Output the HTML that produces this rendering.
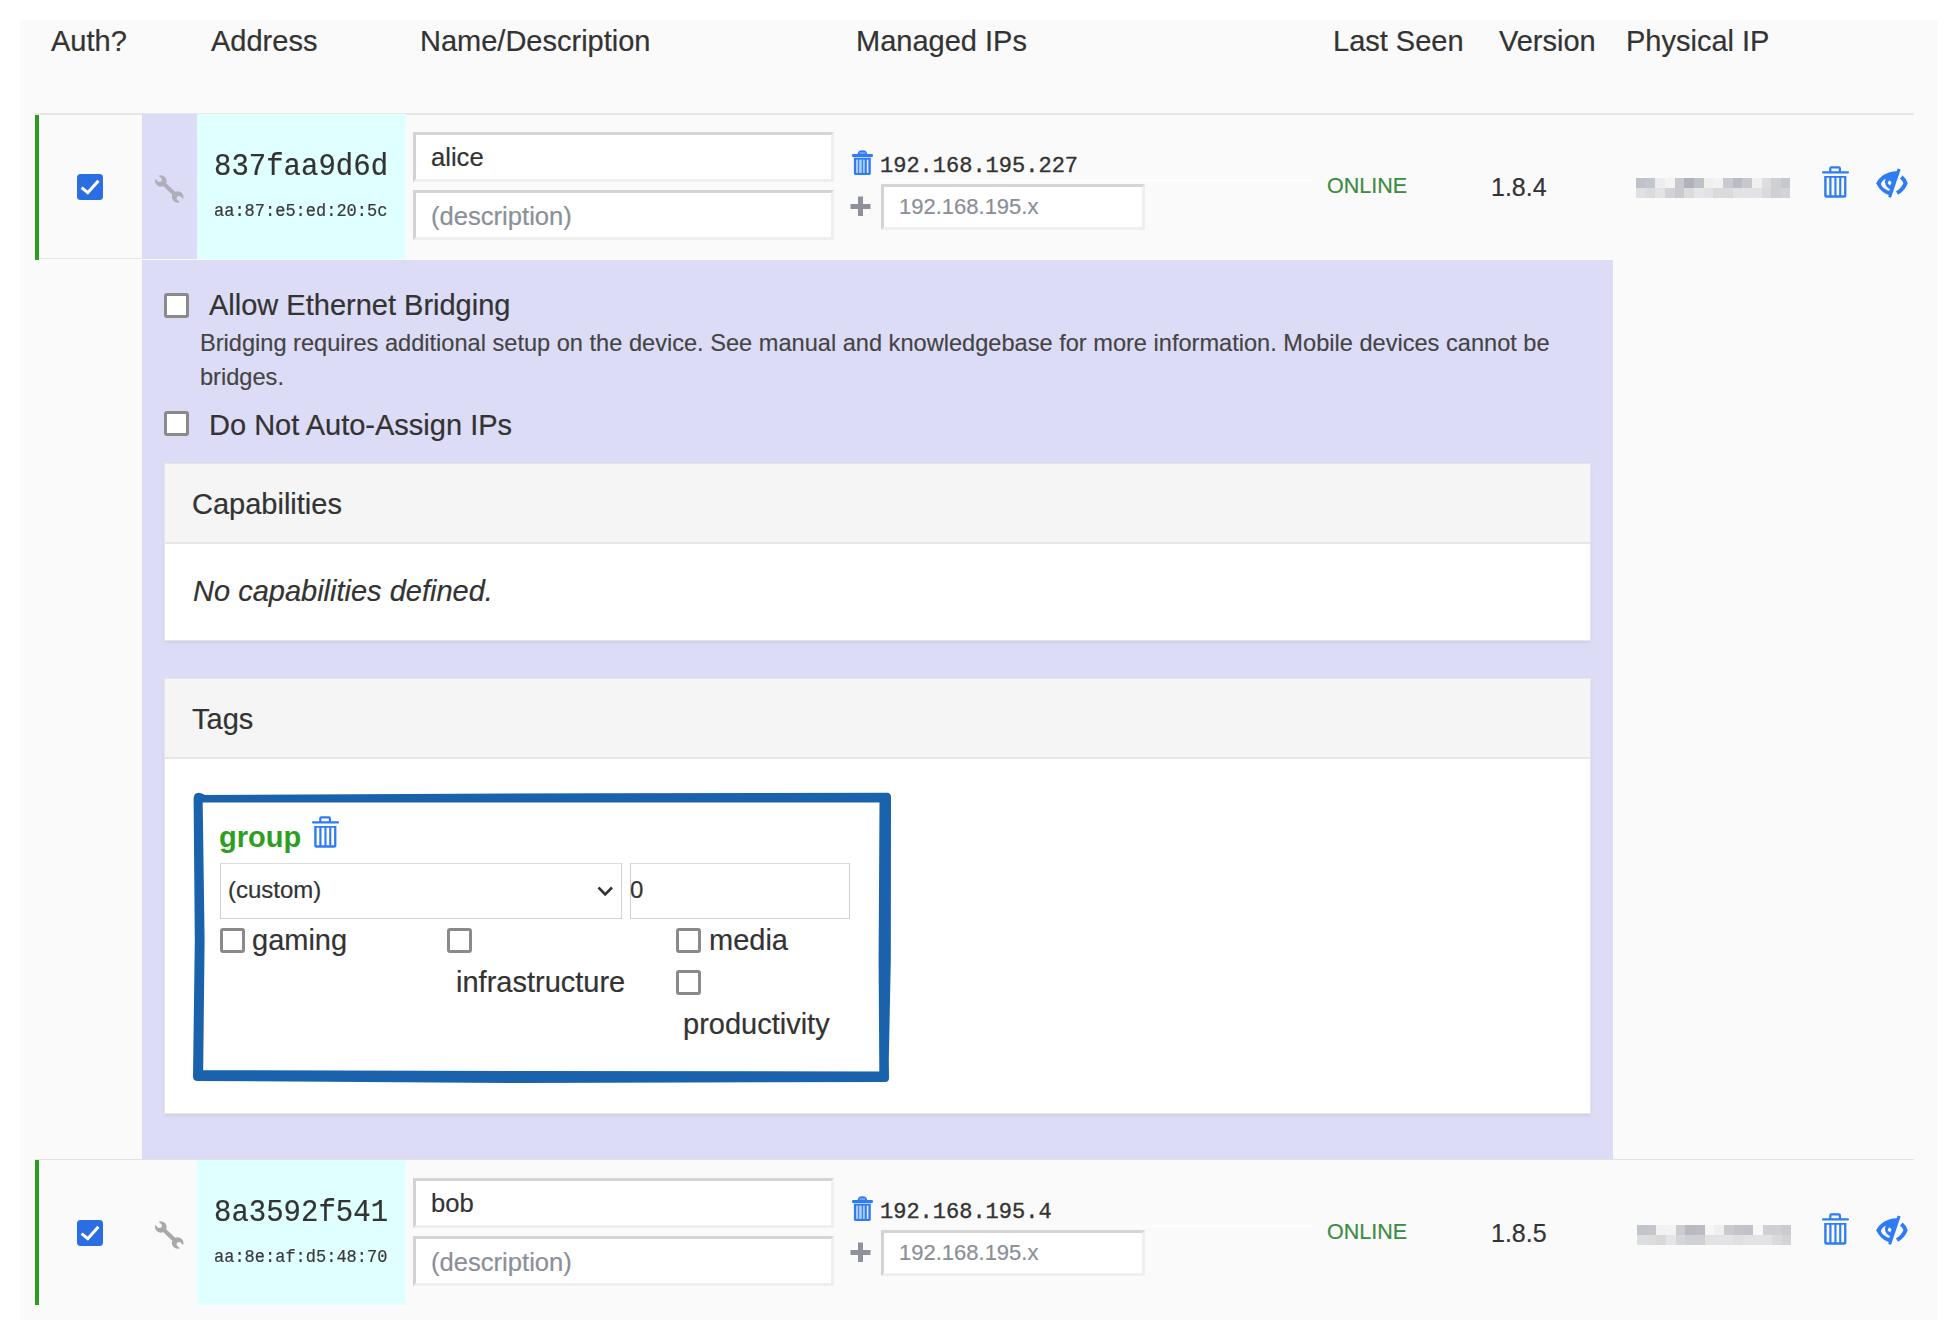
<!DOCTYPE html>
<html><head><meta charset="utf-8">
<style>
html,body{margin:0;padding:0;background:#fff;}
body{width:1958px;height:1340px;overflow:hidden;position:relative;font-family:"Liberation Sans",sans-serif;color:#333;}
.a{position:absolute;white-space:nowrap;}
.t{position:absolute;white-space:nowrap;line-height:1;-webkit-text-stroke:0.2px currentColor;}
.m{font-family:"Liberation Mono",monospace;}
.inp{position:absolute;background:#fff;box-sizing:border-box;border-style:solid;border-width:3px;border-color:#d5d5d5 #efefef #efefef #d2d2d2;}
.cb{position:absolute;box-sizing:border-box;width:25px;height:25px;border:3px solid #8a8a8a;border-radius:3px;background:#fff;}
svg{position:absolute;overflow:visible;}
</style></head>
<body>
<!-- panel -->
<div class="a" style="left:20px;top:20px;width:1918px;height:1300px;background:#fafafa;"></div>

<!-- header -->
<div class="t" id="h1" style="left:51px;top:27.3px;font-size:29px;">Auth?</div>
<div class="t" id="h2" style="left:211px;top:27.3px;font-size:29px;">Address</div>
<div class="t" id="h3" style="left:420px;top:27.3px;font-size:29px;">Name/Description</div>
<div class="t" id="h4" style="left:856px;top:27.3px;font-size:29px;">Managed IPs</div>
<div class="t" id="h5" style="left:1333px;top:27.3px;font-size:29px;">Last Seen</div>
<div class="t" id="h6" style="left:1499px;top:27.3px;font-size:29px;">Version</div>
<div class="t" id="h7" style="left:1626px;top:27.3px;font-size:29px;">Physical IP</div>

<!-- row borders -->
<div class="a" style="left:35px;top:113.2px;width:1879px;height:1.6px;background:#e6e6e6;"></div>
<div class="a" style="left:35px;top:258px;width:107px;height:1px;background:#e6e6e6;"></div>
<div class="a" style="left:35px;top:1159px;width:1879px;height:1px;background:#e2e2e2;"></div>

<!-- green bars -->
<div class="a" style="left:34.6px;top:114.7px;width:4px;height:145px;background:#2a9d1c;"></div>
<div class="a" style="left:34.6px;top:1160px;width:4px;height:145px;background:#2a9d1c;"></div>

<!-- lavender -->
<div class="a" style="left:142px;top:114px;width:55px;height:145px;background:#dddcf6;"></div>
<div class="a" style="left:142px;top:259.6px;width:1470.5px;height:899.4px;background:#dddcf6;"></div>

<!-- cyan address cells -->
<div class="a" style="left:197px;top:114px;width:209px;height:145px;background:#e0ffff;"></div>
<div class="a" style="left:197px;top:1160px;width:209px;height:145px;background:#e0ffff;"></div>

<!-- ROW 1 -->
<div class="a" style="left:77px;top:174px;width:26px;height:26px;border-radius:3.5px;background:#2b6ee3;"></div>
<svg style="left:77px;top:174px;" width="26" height="26"><path d="M4.6 13.6 L10.8 18.7 L21.4 6.8" fill="none" stroke="#fff" stroke-width="3.1"/></svg>

<svg style="left:148px;top:168px;" width="44" height="40" viewBox="0 0 44 40">
<defs><mask id="wm1"><rect width="44" height="40" fill="#fff"/><circle cx="11.6" cy="11.8" r="2.3" fill="#000"/><line x1="11.6" y1="11.8" x2="5" y2="5.2" stroke="#000" stroke-width="4.5"/><circle cx="30.9" cy="30.2" r="2.3" fill="#000"/><line x1="30.9" y1="30.2" x2="37.5" y2="36.8" stroke="#000" stroke-width="4.5"/></mask></defs>
<g mask="url(#wm1)" fill="#aeafb8"><line x1="12.8" y1="13" x2="29.7" y2="29" stroke="#aeafb8" stroke-width="4.2"/><circle cx="12.8" cy="13" r="5.8"/><circle cx="29.7" cy="29" r="5.8"/></g></svg>

<div class="t m" id="addr1" style="left:214px;top:152px;font-size:29px;transform:scaleY(1.06);transform-origin:0 0;">837faa9d6d</div>
<div class="t m" id="mac1" style="left:214px;top:203px;font-size:17px;transform:scaleY(1.11);transform-origin:0 13px;color:#3a3a3a;">aa:87:e5:ed:20:5c</div>

<div class="inp" style="left:413px;top:132px;width:421px;height:50px;"></div>
<div class="t" style="left:431px;top:145px;font-size:25.6px;">alice</div>
<div class="inp" style="left:413px;top:190px;width:421px;height:50px;"></div>
<div class="t" style="left:431px;top:204px;font-size:25.6px;color:#8a8f99;">(description)</div>

<svg style="left:852px;top:150px;" width="21" height="26" viewBox="0 0 21 26"><use href="#trash-s"/></svg>
<div class="t m" style="left:880px;top:155.6px;font-size:22px;-webkit-text-stroke:0.35px #333;">192.168.195.227</div>
<div class="a" style="left:879px;top:180px;width:433px;height:1.2px;background:#fff;"></div>
<svg style="left:850px;top:196px;" width="21" height="21" viewBox="0 0 21 21"><path d="M10.5 0.5v19.5M0.5 10.5h20" stroke="#8e9199" stroke-width="5"/></svg>
<div class="inp" style="left:881px;top:184px;width:264px;height:46px;"></div>
<div class="t" style="left:899px;top:195.5px;font-size:22px;color:#8a8f99;">192.168.195.x</div>

<div class="t" style="left:1327px;top:175.6px;font-size:21.5px;color:#3d8c44;">ONLINE</div>
<div class="t" style="left:1491px;top:175px;font-size:25px;">1.8.4</div>

<svg style="left:1822px;top:166px;" width="27" height="32" viewBox="0 0 27 32"><use href="#trash"/></svg>
<svg style="left:1876px;top:168px;" width="32" height="31" viewBox="0 0 32 31"><use href="#eye"/></svg>

<!-- expanded -->
<div class="cb" style="left:164px;top:293px;"></div>
<div class="t" style="left:209px;top:291px;font-size:29px;">Allow Ethernet Bridging</div>
<div class="a" style="left:200px;top:326px;width:1400px;font-size:23.6px;line-height:34px;white-space:normal;color:#444;-webkit-text-stroke:0.15px #444;">Bridging requires additional setup on the device. See manual and knowledgebase for more information. Mobile devices cannot be bridges.</div>
<div class="cb" style="left:164px;top:411px;"></div>
<div class="t" style="left:209px;top:411px;font-size:29px;">Do Not Auto-Assign IPs</div>

<!-- capabilities panel -->
<div class="a" style="left:165px;top:464px;width:1425px;height:176px;background:#fff;box-shadow:0 0 0 1px #e6e6e6,0 2px 4px rgba(0,0,0,0.09);"></div>
<div class="a" style="left:165px;top:464px;width:1425px;height:78px;background:#f5f5f5;border-bottom:2px solid #e6e6e6;"></div>
<div class="t" style="left:192px;top:490px;font-size:29px;">Capabilities</div>
<div class="t" style="left:193px;top:577px;font-size:29px;font-style:italic;">No capabilities defined.</div>

<!-- tags panel -->
<div class="a" style="left:165px;top:679px;width:1425px;height:434px;background:#fff;box-shadow:0 0 0 1px #e6e6e6,0 2px 4px rgba(0,0,0,0.09);"></div>
<div class="a" style="left:165px;top:679px;width:1425px;height:78px;background:#f5f5f5;border-bottom:2px solid #e6e6e6;"></div>
<div class="t" style="left:192px;top:705px;font-size:29px;">Tags</div>

<svg style="left:0;top:0;" width="1958" height="1340"><path fill="#1a62ab" fill-rule="evenodd" d="M193.6 799 Q193.8 792.6 198.8 792.8 Q202 793 205 794.9 L600 793.2 L887 792.8 Q891 793 891 797 L890.8 960 L888.8 1060 L889 1078 Q889 1082 885 1082 L520 1083 L197 1081 Q193 1080.5 193 1076.5 L194.8 940 Z M202.7 802.6 L879.5 802.6 L878.6 960 L879.3 1071.5 L520 1071 L203.2 1070.2 L204.6 940 Z"/></svg>

<div class="t" style="left:219px;top:822.6px;font-size:29px;font-weight:bold;color:#2c9f1f;-webkit-text-stroke:0;">group</div>
<svg style="left:312px;top:816px;" width="27" height="32" viewBox="0 0 27 32"><use href="#trash"/></svg>

<div class="a" style="left:220px;top:862.5px;width:402px;height:56.5px;box-sizing:border-box;border:1.5px solid #d2d2d6;border-top-color:#dcdcdc;background:#fff;"></div>
<div class="t" style="left:228px;top:878px;font-size:24px;">(custom)</div>
<svg style="left:597px;top:886px;" width="17" height="11" viewBox="0 0 17 11"><path d="M1.5 1.5 L8.2 8.5 L15 1.5" fill="none" stroke="#333" stroke-width="2.6"/></svg>
<div class="a" style="left:630px;top:862.5px;width:220px;height:56.5px;box-sizing:border-box;border:1.5px solid #d2d2d6;border-top-color:#dcdcdc;background:#fff;"></div>
<div class="t" style="left:630px;top:878px;font-size:24px;">0</div>

<div class="cb" style="left:220px;top:928px;"></div>
<div class="t" style="left:252px;top:926px;font-size:29px;">gaming</div>
<div class="cb" style="left:447px;top:928px;"></div>
<div class="t" style="left:456px;top:968px;font-size:29px;">infrastructure</div>
<div class="cb" style="left:676px;top:928px;"></div>
<div class="t" style="left:709px;top:926px;font-size:29px;">media</div>
<div class="cb" style="left:676px;top:970px;"></div>
<div class="t" style="left:683px;top:1010px;font-size:29px;">productivity</div>

<!-- ROW 2 -->
<div class="a" style="left:77px;top:1220px;width:26px;height:26px;border-radius:3.5px;background:#2b6ee3;"></div>
<svg style="left:77px;top:1220px;" width="26" height="26"><path d="M4.6 13.6 L10.8 18.7 L21.4 6.8" fill="none" stroke="#fff" stroke-width="3.1"/></svg>
<svg style="left:148px;top:1214px;" width="44" height="40" viewBox="0 0 44 40">
<defs><mask id="wm2"><rect width="44" height="40" fill="#fff"/><circle cx="11.6" cy="11.8" r="2.3" fill="#000"/><line x1="11.6" y1="11.8" x2="5" y2="5.2" stroke="#000" stroke-width="4.5"/><circle cx="30.9" cy="30.2" r="2.3" fill="#000"/><line x1="30.9" y1="30.2" x2="37.5" y2="36.8" stroke="#000" stroke-width="4.5"/></mask></defs>
<g mask="url(#wm2)" fill="#a9a9a9"><line x1="12.8" y1="13" x2="29.7" y2="29" stroke="#a9a9a9" stroke-width="4.2"/><circle cx="12.8" cy="13" r="5.8"/><circle cx="29.7" cy="29" r="5.8"/></g></svg>

<div class="t m" style="left:214px;top:1198px;font-size:29px;transform:scaleY(1.06);transform-origin:0 0;">8a3592f541</div>
<div class="t m" style="left:214px;top:1249px;font-size:17px;transform:scaleY(1.11);transform-origin:0 13px;color:#3a3a3a;">aa:8e:af:d5:48:70</div>

<div class="inp" style="left:413px;top:1178px;width:421px;height:50px;"></div>
<div class="t" style="left:431px;top:1191px;font-size:25.6px;">bob</div>
<div class="inp" style="left:413px;top:1236px;width:421px;height:50px;"></div>
<div class="t" style="left:431px;top:1250px;font-size:25.6px;color:#8a8f99;">(description)</div>

<svg style="left:852px;top:1196px;" width="21" height="26" viewBox="0 0 21 26"><use href="#trash-s"/></svg>
<div class="t m" style="left:880px;top:1201.6px;font-size:22px;-webkit-text-stroke:0.35px #333;">192.168.195.4</div>
<div class="a" style="left:879px;top:1226px;width:433px;height:1.2px;background:#fff;"></div>
<svg style="left:850px;top:1242px;" width="21" height="21" viewBox="0 0 21 21"><path d="M10.5 0.5v19.5M0.5 10.5h20" stroke="#8e9199" stroke-width="5"/></svg>
<div class="inp" style="left:881px;top:1230px;width:264px;height:46px;"></div>
<div class="t" style="left:899px;top:1241.5px;font-size:22px;color:#8a8f99;">192.168.195.x</div>

<div class="t" style="left:1327px;top:1221.6px;font-size:21.5px;color:#3d8c44;">ONLINE</div>
<div class="t" style="left:1491px;top:1221px;font-size:25px;">1.8.5</div>

<svg style="left:1822px;top:1213px;" width="27" height="32" viewBox="0 0 27 32"><use href="#trash"/></svg>
<svg style="left:1876px;top:1215px;" width="32" height="31" viewBox="0 0 32 31"><use href="#eye"/></svg>

<!-- blurred IPs -->
<div class="a" style="left:1635.6px;top:178.2px;width:154.6px;height:9.6px;background:linear-gradient(to right,#c0c2ca 0.00px 9.66px,#c4c6ce 9.66px 19.32px,#ececee 19.32px 28.99px,#f3f3f3 28.99px 38.65px,#c8c9cf 38.65px 48.31px,#b0b1ba 48.31px 57.97px,#c0c2ca 57.97px 67.64px,#efefef 67.64px 77.30px,#f2f2f2 77.30px 86.96px,#c9cacf 86.96px 96.62px,#babcc5 96.62px 106.29px,#c8c9ce 106.29px 115.95px,#f0f0f0 115.95px 125.61px,#dddddd 125.61px 135.28px,#cfd0d4 135.28px 144.94px,#c7c8cd 144.94px 154.60px);"></div>
<div class="a" style="left:1635.6px;top:187.8px;width:154.6px;height:9.8px;background:linear-gradient(to right,#e0e0e4 0.00px 9.66px,#dadbdd 9.66px 19.32px,#e3e3e5 19.32px 28.99px,#d2d3d8 28.99px 38.65px,#cacbd0 38.65px 48.31px,#dcdcdc 48.31px 57.97px,#e6e6e8 57.97px 67.64px,#e2e2e6 67.64px 77.30px,#dadada 77.30px 86.96px,#dadada 86.96px 96.62px,#e2e2e6 96.62px 106.29px,#e3e3e6 106.29px 115.95px,#e2e2e6 115.95px 125.61px,#dadadd 125.61px 135.28px,#cfd0d4 135.28px 144.94px,#d3d4d8 144.94px 154.60px);"></div>
<div class="a" style="left:1636.9px;top:1225.4px;width:154.6px;height:9.7px;background:linear-gradient(to right,#c2c4cb 0.00px 9.66px,#c5c6cc 9.66px 19.32px,#f2f2f2 19.32px 28.99px,#f3f3f3 28.99px 38.65px,#cbccd0 38.65px 48.31px,#b8b9c1 48.31px 57.97px,#babbc3 57.97px 67.64px,#f6f6f6 67.64px 77.30px,#efefef 77.30px 86.96px,#c9cacf 86.96px 96.62px,#c4c5cb 96.62px 106.29px,#c2c3ca 106.29px 115.95px,#f7f7f7 115.95px 125.61px,#cfd0d4 125.61px 135.28px,#d0d0d4 135.28px 144.94px,#cbccd0 144.94px 154.60px);"></div>
<div class="a" style="left:1636.9px;top:1235.1px;width:154.6px;height:9.5px;background:linear-gradient(to right,#dcdde0 0.00px 9.66px,#dcdcdc 9.66px 19.32px,#d9d9d9 19.32px 28.99px,#e5e5e7 28.99px 38.65px,#d5d6d9 38.65px 48.31px,#cfd0d4 48.31px 57.97px,#cfd0d4 57.97px 67.64px,#e2e2e5 67.64px 77.30px,#e3e3e6 77.30px 86.96px,#e3e3e6 86.96px 96.62px,#e0e0e3 96.62px 106.29px,#e3e3e6 106.29px 115.95px,#e3e3e6 115.95px 125.61px,#e3e3e6 125.61px 135.28px,#dadadd 135.28px 144.94px,#d3d4d8 144.94px 154.60px);"></div>
<!-- defs -->
<svg width="0" height="0" style="position:absolute">
<defs>
<g id="trash" fill="#2d7cf6">
<rect x="0" y="5.2" width="27" height="2.3" rx="1"/>
<path d="M7.2 6 V2.5 Q7.2 0.3 9.4 0.3 H16.8 Q19 0.3 19 2.5 V6 H16.8 V2.5 H9.4 V6 Z"/>
<path d="M2.2 9.9 H24.4 V29.3 Q24.4 31.8 21.9 31.8 H4.7 Q2.2 31.8 2.2 29.3 Z M4.6 11.7 V29.3 H7.3 V11.7 Z M9.5 11.7 V29.3 H12.4 V11.7 Z M14.5 11.7 V29.3 H17.2 V11.7 Z M19.3 11.7 V29.3 H22.1 V11.7 Z" fill-rule="evenodd"/>
</g>
<g id="trash-s">
<rect x="0" y="3.9" width="21" height="3.1" rx="1.3" fill="#2d7cf6"/>
<path d="M5.6 4.6 Q5.6 0.2 10.5 0.2 Q15.2 0.2 15.2 4.6 Z" fill="#2d7cf6"/>
<rect x="1.5" y="7" width="18" height="1" fill="#b8d2f8"/><rect x="7.6" y="2.4" width="5.6" height="1.3" fill="#8fb8f6"/>
<path d="M1.9 8 H18.8 V23.6 Q18.8 25 17.3 25 H3.4 Q1.9 25 1.9 23.6 Z" fill="#2d7cf6"/>
<rect x="4.0" y="9.6" width="2.1" height="13.3" fill="#a9c9f8"/>
<rect x="7.1" y="9.6" width="2.6" height="13.3" fill="#b3cff8"/>
<rect x="10.9" y="9.6" width="1.9" height="13.3" fill="#a9c9f8"/>
<rect x="14.8" y="9.6" width="1.6" height="13.3" fill="#e4ecfa"/>
</g>
<g id="eye">
<path fill="#2d7cf6" d="M20.2 3.2 C11.5 3.4 2.6 8.6 0.3 15.3 C2.4 20.8 7.8 25.6 13.6 27.3 L21.2 3.2 Z"/>
<path fill="#fafafa" d="M4.9 15.8 C5.6 13.6 7.6 11.7 9.8 10.8 C9.0 12.3 8.8 13.9 9.2 15.5 C9.8 17.9 11.5 19.8 13.9 21.0 L13.3 23.0 C9.5 21.9 5.6 19.3 4.9 15.8 Z"/>
<path fill="#fafafa" d="M13.0 12.3 L15.6 14.2 L14.2 17.6 L11.6 15.6 Z"/>
<path fill="#2d7cf6" d="M21.6 0.6 L24.6 1.4 L15 29.8 L12.2 28.9 Z"/>
<path fill="none" stroke="#2d7cf6" stroke-width="4" stroke-linejoin="round" d="M25.3 9.0 Q28.8 12 29.6 15.2 Q27 21.5 21.0 25.0"/>
</g>
</defs></svg>
</body></html>
